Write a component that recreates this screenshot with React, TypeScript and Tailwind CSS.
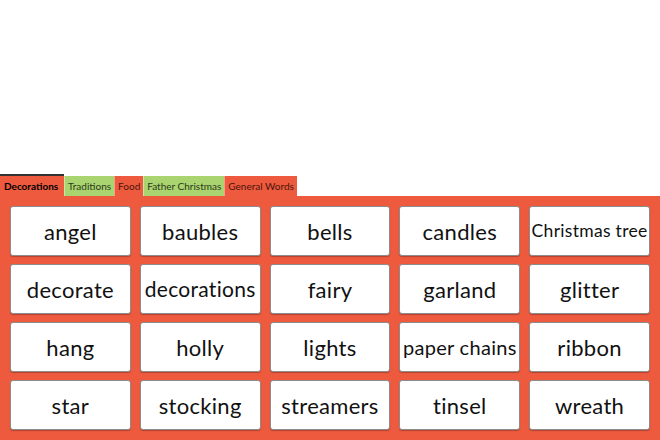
const tabs = [
  { name: 'Decorations', bg: 'bg-[#ee5a3e]', text: 'text-black font-bold', active: true },
  { name: 'Traditions', bg: 'bg-[#a9d46f]', text: 'text-[#2b3a1c]', active: false },
  { name: 'Food', bg: 'bg-[#ee5a3e]', text: 'text-[#4a140a]', active: false },
  { name: 'Father Christmas', bg: 'bg-[#a9d46f]', text: 'text-[#2b3a1c]', active: false },
  { name: 'General Words', bg: 'bg-[#ee5a3e]', text: 'text-[#4a140a]', active: false },
]

const words: { w: string; size?: string }[] = [
  { w: 'angel' }, { w: 'baubles' }, { w: 'bells' }, { w: 'candles' }, { w: 'Christmas tree', size: 'text-[17.5px]' },
  { w: 'decorate' }, { w: 'decorations', size: 'text-[21px]' }, { w: 'fairy' }, { w: 'garland' }, { w: 'glitter' },
  { w: 'hang' }, { w: 'holly' }, { w: 'lights' }, { w: 'paper chains', size: 'text-[20px]' }, { w: 'ribbon' },
  { w: 'star' }, { w: 'stocking' }, { w: 'streamers' }, { w: 'tinsel' }, { w: 'wreath' },
]

export default function App() {
  return (
    <div className="h-[440px] w-[660px] overflow-hidden bg-white flex flex-col" style={{ fontFamily: 'Lato, "Open Sans", sans-serif' }}>
      <div className="h-[174px] shrink-0" />

      <div className="flex items-end h-[22px]">
        {tabs.map(t => (
          <div
            key={t.name}
            className={`${t.bg} ${t.text} text-[10px] flex items-center leading-none ${
              t.active ? 'h-[22px] border-t-2 border-[#333] w-[64px] px-[4px]' : 'h-[20px] px-[3px] border-l border-white/40'
            }`}
          >
            {t.name}
          </div>
        ))}
      </div>

      <div className="bg-[#ee5a3e] flex-1 p-[10px]">
        <div className="grid grid-cols-5 gap-x-[9px] gap-y-[8px]">
          {words.map(item => (
            <div
              key={item.w}
              className="h-[50px] bg-white border border-[#8c8c8c] rounded-[3px] shadow-[0_1px_1px_rgba(0,0,0,0.25)] flex items-center justify-center whitespace-nowrap overflow-hidden"
            >
              <span className={`${item.size ?? 'text-[22px]'} font-normal text-[#111] tracking-[0.3px]`}>{item.w}</span>
            </div>
          ))}
        </div>
      </div>
    </div>
  )
}
